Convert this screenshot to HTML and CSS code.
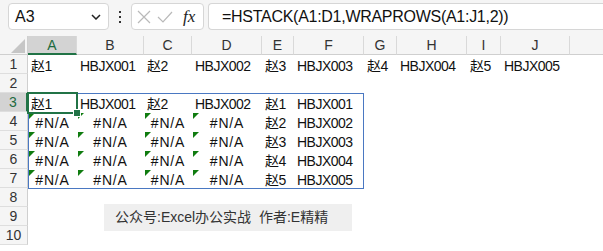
FILE: index.html
```html
<!DOCTYPE html>
<html>
<head>
<meta charset="utf-8">
<link rel="stylesheet" href="styles.css">
</head>
<body>
<div class="fbar">
  <div class="namebox">
    <span class="nb-text">A3</span>
    <svg class="chev" width="10" height="6" viewBox="0 0 10 6"><path d="M1 1 L5 5 L9 1" fill="none" stroke="#222" stroke-width="1.5"/></svg>
  </div>
  <div class="dots"><i></i><i></i><i></i></div>
  <div class="fxbox">
    <svg width="14" height="14" viewBox="0 0 14 14"><path d="M1 1 L13 13 M13 1 L1 13" stroke="#b9b9b9" stroke-width="1.2" fill="none"/></svg>
    <svg width="16" height="14" viewBox="0 0 16 14"><path d="M1 7 L6 12 L15 2" stroke="#b9b9b9" stroke-width="1.2" fill="none"/></svg>
    <span class="fx">fx</span>
  </div>
  <div class="formula">=HSTACK(A1:D1,WRAPROWS(A1:J1,2))</div>
</div>
<div class="sheet">
  <div class="grid">
    <div class="corner"><svg width="14" height="14" viewBox="0 0 14 14"><path d="M14 0 L14 14 L0 14 Z" fill="#c6c6c6"/></svg></div>
    <div class="ch sel">A</div><div class="ch">B</div><div class="ch">C</div><div class="ch">D</div><div class="ch">E</div><div class="ch">F</div><div class="ch">G</div><div class="ch">H</div><div class="ch">I</div><div class="ch">J</div><div class="ch last"></div>

    <div class="rh">1</div><div class="c">赵1</div><div class="c">HBJX001</div><div class="c">赵2</div><div class="c">HBJX002</div><div class="c">赵3</div><div class="c">HBJX003</div><div class="c">赵4</div><div class="c">HBJX004</div><div class="c">赵5</div><div class="c">HBJX005</div><div class="c"></div>

    <div class="rh">2</div><div class="c"></div><div class="c"></div><div class="c"></div><div class="c"></div><div class="c"></div><div class="c"></div><div class="c"></div><div class="c"></div><div class="c"></div><div class="c"></div><div class="c"></div>

    <div class="rh sel">3</div><div class="c">赵1</div><div class="c">HBJX001</div><div class="c">赵2</div><div class="c">HBJX002</div><div class="c">赵1</div><div class="c">HBJX001</div><div class="c"></div><div class="c"></div><div class="c"></div><div class="c"></div><div class="c"></div>

    <div class="rh">4</div><div class="c na">#N/A</div><div class="c na">#N/A</div><div class="c na">#N/A</div><div class="c na">#N/A</div><div class="c">赵2</div><div class="c">HBJX002</div><div class="c"></div><div class="c"></div><div class="c"></div><div class="c"></div><div class="c"></div>

    <div class="rh">5</div><div class="c na">#N/A</div><div class="c na">#N/A</div><div class="c na">#N/A</div><div class="c na">#N/A</div><div class="c">赵3</div><div class="c">HBJX003</div><div class="c"></div><div class="c"></div><div class="c"></div><div class="c"></div><div class="c"></div>

    <div class="rh">6</div><div class="c na">#N/A</div><div class="c na">#N/A</div><div class="c na">#N/A</div><div class="c na">#N/A</div><div class="c">赵4</div><div class="c">HBJX004</div><div class="c"></div><div class="c"></div><div class="c"></div><div class="c"></div><div class="c"></div>

    <div class="rh">7</div><div class="c na">#N/A</div><div class="c na">#N/A</div><div class="c na">#N/A</div><div class="c na">#N/A</div><div class="c">赵5</div><div class="c">HBJX005</div><div class="c"></div><div class="c"></div><div class="c"></div><div class="c"></div><div class="c"></div>

    <div class="rh">8</div><div class="c"></div><div class="c"></div><div class="c"></div><div class="c"></div><div class="c"></div><div class="c"></div><div class="c"></div><div class="c"></div><div class="c"></div><div class="c"></div><div class="c"></div>
    <div class="rh">9</div><div class="c"></div><div class="c"></div><div class="c"></div><div class="c"></div><div class="c"></div><div class="c"></div><div class="c"></div><div class="c"></div><div class="c"></div><div class="c"></div><div class="c"></div>
    <div class="rh">10</div><div class="c"></div><div class="c"></div><div class="c"></div><div class="c"></div><div class="c"></div><div class="c"></div><div class="c"></div><div class="c"></div><div class="c"></div><div class="c"></div><div class="c"></div>
  </div>
  <div class="spill"></div>
  <div class="selbox"><span class="handle"></span></div>
  <div class="note">公众号:Excel办公实战&nbsp; 作者:E精精</div>
</div>
</body>
</html>
```

FILE: styles.css
```css
html, body {
  margin: 0;
  padding: 0;
  background: #ffffff;
  font-family: "Liberation Sans", "Noto Sans CJK SC", sans-serif;
  width: 603px;
  height: 251px;
  overflow: hidden;
}

.fbar {
  height: 36px;
  background: #f5f5f5;
  display: flex;
  align-items: flex-start;
  padding-top: 3px;
  box-sizing: border-box;
}

.namebox {
  margin-left: 8px;
  width: 101px;
  height: 27px;
  box-sizing: border-box;
  background: #fff;
  border: 1px solid #d6d6d6;
  border-radius: 4px;
  display: flex;
  align-items: center;
  justify-content: space-between;
  padding: 0 7px 0 6px;
}

.nb-text {
  font-size: 16px;
  color: #111;
}

.dots {
  width: 22px;
  height: 27px;
  display: flex;
  flex-direction: column;
  align-items: center;
  justify-content: center;
  gap: 3px;
}

.dots i {
  display: block;
  width: 2px;
  height: 2px;
  background: #333;
}

.fxbox {
  width: 73px;
  height: 27px;
  box-sizing: border-box;
  background: #fff;
  border: 1px solid #d6d6d6;
  border-radius: 4px;
  display: flex;
  align-items: center;
  padding-left: 5px;
  gap: 6px;
}

.fx {
  font-family: "Liberation Serif", serif;
  font-style: italic;
  font-size: 17px;
  color: #222;
  margin-left: 4px;
}

.formula {
  margin-left: 4px;
  flex: 1;
  height: 27px;
  box-sizing: border-box;
  background: #fff;
  border: 1px solid #d6d6d6;
  border-right: none;
  border-radius: 4px 0 0 4px;
  padding-left: 13px;
  font-size: 16px;
  line-height: 25px;
  letter-spacing: -0.28px;
  color: #111;
  white-space: nowrap;
}

.sheet {
  position: relative;
}

.grid {
  display: grid;
  grid-template-columns: 28px 49px 67px 48px 70px 32px 70px 33px 70px 34px 69px 1fr;
  grid-auto-rows: 19px;
}

.corner {
  background: #f5f5f5;
  border-bottom: 1px solid #cfcfcf;
  border-right: 1px solid #cfcfcf;
  box-sizing: border-box;
  display: flex;
  align-items: flex-end;
  justify-content: flex-end;
  padding: 0 2px 1px 0;
}

.ch {
  background: #f5f5f5;
  border-bottom: 1px solid #cfcfcf;
  border-right: 1px solid #d9d9d9;
  box-sizing: border-box;
  text-align: center;
  font-size: 14px;
  line-height: 19px;
  color: #333;
}

.ch.sel {
  background: #d3d3d3;
  border-bottom: 2px solid #217346;
  color: #1d6b40;
}

.ch.last {
  border-right: none;
}

.rh {
  background: #f5f5f5;
  border-right: 1px solid #cfcfcf;
  border-bottom: 1px solid #dedede;
  box-sizing: border-box;
  text-align: center;
  font-size: 14px;
  line-height: 19px;
  color: #333;
}

.rh.sel {
  background: #d3d3d3;
  border-right: 2px solid #217346;
  color: #1d6b40;
}

.c {
  position: relative;
  font-size: 14px;
  line-height: 20px;
  padding-top: 1px;
  padding-left: 3px;
  color: #111;
  white-space: nowrap;
  letter-spacing: -0.5px;
}

.c.na {
  text-align: center;
  padding-left: 0;
  letter-spacing: 0.8px;
}

.c.na::before {
  content: "";
  position: absolute;
  left: 1px;
  top: 1px;
  border-top: 6px solid #107c10;
  border-right: 6px solid transparent;
}

.spill {
  position: absolute;
  left: 28px;
  top: 57px;
  width: 336px;
  height: 96px;
  box-sizing: border-box;
  border: 1px solid #4a78c2;
  pointer-events: none;
}

.selbox {
  position: absolute;
  left: 27px;
  top: 56px;
  width: 51px;
  height: 22px;
  box-sizing: border-box;
  border: 2px solid #217346;
}

.handle {
  position: absolute;
  right: -5px;
  bottom: -5px;
  width: 6px;
  height: 6px;
  background: #217346;
  border: 1px solid #fff;
}

.note {
  position: absolute;
  left: 104px;
  top: 168px;
  width: 248px;
  height: 27px;
  box-sizing: border-box;
  background: #efefef;
  padding-left: 11px;
  font-size: 14px;
  line-height: 27px;
  color: #333;
  white-space: nowrap;
}
```
